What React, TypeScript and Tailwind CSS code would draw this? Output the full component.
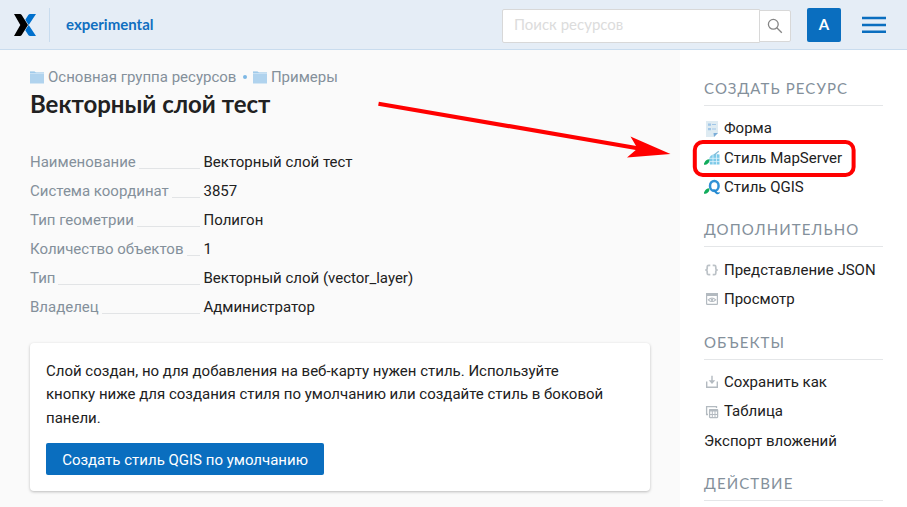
import type { ReactNode } from "react";

function Folder() {
  return (
    <svg width="14" height="13" viewBox="0 0 14 13" className="mr-1 shrink-0">
      <path d="M0 .8h5l1 1h8V12.600H0z" fill="#b0d3ee" />
      <path d="M0 .5h4.500l1 1H14v.8H0z" fill="#a0caea" />
      <path d="M0 2.500h14" stroke="#d5e8f6" strokeWidth=".7" />
    </svg>
  );
}

function FormIcon() {
  return (
    <svg width="16" height="16" viewBox="0 0 16 16">
      <path d="M2 0h12v12l-4 4H2z" fill="#deebf2" />
      <path d="M9.500 12H14l-4 4z" fill="#7badd8" />
      <path d="M4 2.500h3v2.200H4zM4 7h3v2.200H4z" fill="#a0c6e7" />
      <path d="M8 3.500h4M8 8h4" stroke="#a0c6e7" strokeWidth="1" />
    </svg>
  );
}

const leaf = "M-.5 14.800C1 10.500 2.500 9.300 5.300 9.300C5.800 12 4 14.800 -.5 14.800Z";

function MapServerIcon() {
  return (
    <svg width="16" height="16" viewBox="0 0 16 16">
      <path d="M5 8.500Q6.500 5 9 4.500Q12 3.500 15.500 4.500V14.500H6z" fill="#7cc9e8" />
      <path d="M9 4v11M12.500 4v11M5 8.300h11M5 11.600h11" stroke="#e2f4fb" strokeWidth=".8" />
      <path d="M10 5L14.800 1.200" stroke="#84bcd8" strokeWidth="1.200" />
      <path d={leaf} fill="#12ac5c" />
    </svg>
  );
}

function QgisIcon() {
  return (
    <svg width="16" height="16" viewBox="0 0 16 16">
      <ellipse cx="10.300" cy="6.900" rx="4.300" ry="5" fill="none" stroke="#3191d5" strokeWidth="2.500" />
      <path d="M9 10.500Q11 9.500 12.500 12.500Q14 14 16 13Q15.500 15.800 12.800 15.200Q11 14.800 10 12z" fill="#2389d1" />
      <path d={leaf} fill="#12ac5c" />
    </svg>
  );
}

function BracesIcon() {
  return (
    <svg width="16" height="16" viewBox="0 0 16 16" fill="none" stroke="#bcc2c7" strokeWidth="1.700">
      <path d="M6.300 3.300H4.700Q3.200 3.300 3.200 4.800v1.700Q3.200 8 1.200 8Q3.200 8 3.200 9.500v1.700Q3.200 12.700 4.700 12.700H6.300M8.700 3.300h1.600Q11.800 3.300 11.800 4.800v1.700Q11.800 8 13.800 8Q11.800 8 11.800 9.500v1.700Q11.800 12.700 10.300 12.700H8.700" />
    </svg>
  );
}

function PreviewIcon() {
  return (
    <svg width="16" height="16" viewBox="0 0 16 16" fill="none" stroke="#b3bac0">
      <rect x="2.600" y="2.600" width="10.800" height="10.800" rx=".6" strokeWidth="1.200" />
      <path d="M2 3.500h12" strokeWidth="3" />
      <path d="M4.300 8.800Q8 5.200 11.700 8.800Q8 12.200 4.300 8.800Z" strokeWidth="1.100" />
      <circle cx="8" cy="8.700" r="1.200" fill="#b3bac0" stroke="none" />
    </svg>
  );
}

function SaveIcon() {
  return (
    <svg width="16" height="16" viewBox="0 0 16 16" fill="none" stroke="#b3bac0" strokeWidth="1.400">
      <path d="M2.700 7.500v5.800h10.600V7.500M8 1.800v7" />
      <path d="M4.700 6.300h6.600L8 10z" fill="#b3bac0" stroke="none" />
    </svg>
  );
}

function TableIcon() {
  return (
    <svg width="16" height="16" viewBox="0 0 16 16" fill="none" stroke="#b3bac0" strokeWidth="1.300">
      <path d="M4 10.500H2.600V2.600h9.900V4" />
      <rect x="5.600" y="5.600" width="8" height="8" rx=".5" />
      <path d="M5 6.500h9" strokeWidth="2" />
      <path d="M5 10.500h9M8.300 7v7M11 7v7" strokeWidth="1" />
    </svg>
  );
}

function Heading({ children }: { children: ReactNode }) {
  return (
    <h2 className="h-[31px] border-b border-[#e4e6e8] font-['Lato','Open_Sans',sans-serif] text-[15px] leading-[26px] tracking-[1.100px] whitespace-nowrap text-[#84909b]">
      {children}
    </h2>
  );
}

function Item({ icon, children }: { icon?: ReactNode; children: ReactNode }) {
  return (
    <li className="flex h-[29.250px] items-center whitespace-nowrap">
      {icon && <span className="mr-1 shrink-0">{icon}</span>}
      <span>{children}</span>
    </li>
  );
}

const details = [
  ["Наименование", "Векторный слой тест"],
  ["Система координат", "3857"],
  ["Тип геометрии", "Полигон"],
  ["Количество объектов", "1"],
  ["Тип", "Векторный слой (vector_layer)"],
  ["Владелец", "Администратор"],
];

export default function App() {
  return (
    <div className="relative flex h-[507px] w-[907px] flex-col overflow-hidden bg-[#fafafa] font-['Roboto','Noto_Sans',sans-serif] text-[15px] text-[#212121]">
      <header className="flex h-[50px] shrink-0 items-center border-b border-[#c9dcee] bg-[#e5edf6] font-['Lato','Open_Sans',sans-serif]">
        <svg width="22" height="22" viewBox="0 0 22 22" className="ml-[14px]">
          <path d="M0 0H6Q7 0 7.700 1L14 11L7.700 21Q7 22 6 22H0L6.300 11z" fill="#000" />
          <path d="M22 0H16.200Q15 0 14.300 1L11.300 5.700L14.700 11L22 0ZM22 22H16.200Q15 22 14.300 21L11.300 16.300L14.700 11z" fill="#0070cd" />
        </svg>
        <span className="ml-[13px] h-[34px] w-px bg-[#c9dcee]" />
        <span className="ml-4 flex-1 text-[15px] font-bold text-[#106fc0]">experimental</span>
        <div className="mt-0.5 flex h-[34px] w-[289px] items-center">
          <div className="flex h-[34px] flex-1 items-center rounded-l-[2px] border border-[#d8d8d8] bg-white pb-0.5 pl-[11px] text-[15px] text-[#dcdcdc]">Поиск ресурсов</div>
          <div className="-ml-px flex h-8 w-8 items-center justify-center rounded-r-[2px] border border-[#d8d8d8] bg-white">
            <svg width="16" height="16" viewBox="0 0 16 16" fill="none" stroke="#858585" strokeWidth="1.300">
              <circle cx="6.300" cy="6.300" r="4.900" />
              <path d="M9.800 9.800l5 5" />
            </svg>
          </div>
        </div>
        <div className="ml-4 flex h-[34px] w-[34px] items-center justify-center rounded-[2px] bg-[#0a6ebf] text-[15px] font-bold text-white">A</div>
        <svg width="24" height="17" viewBox="0 0 24 17" className="mr-[21px] ml-[21px]" stroke="#0a6ebf" strokeWidth="2.500">
          <path d="M0 2h24M0 9h24M0 15.750h24" />
        </svg>
      </header>
      <div className="flex min-h-0 flex-1">
        <main className="w-[680px] shrink-0 pr-[30px] pl-[30px]">
          <nav className="mt-4 flex h-[22px] items-center whitespace-nowrap text-[#84909b]">
            <Folder />
            <span>Основная группа ресурсов</span>
            <span className="mr-[6px] ml-[6.500px] h-1 w-1 rounded-full bg-[#7db7e4]" />
            <Folder />
            <span>Примеры</span>
          </nav>
          <h1 className="h-[34px] font-['Lato','Open_Sans',sans-serif] text-[24px] leading-[32px] font-bold">Векторный слой тест</h1>
          <dl className="mt-[26px]">
            {details.map(([label, value]) => (
              <div key={label} className="flex h-[29px] items-center whitespace-nowrap">
                <dt className="mr-[3.500px] flex w-[170px] items-center text-[#84909b]">
                  {label}
                  <span className="ml-[3px] h-[13px] flex-1 border-b border-[#e2e4e6]" />
                </dt>
                <dd>{value}</dd>
              </div>
            ))}
          </dl>
          <section className="mt-[21px] h-[148px] rounded-[4px] bg-white px-4 pt-4 shadow-[0_1px_3px_rgba(0,0,0,0.25)]">
            <p className="w-[562px] leading-[23.600px]"><span className="relative top-[0.600px]">Слой создан, но для добавления на веб-карту нужен стиль. Используйте кнопку ниже для создания стиля по умолчанию или создайте стиль в боковой панели.</span></p>
            <button className="mt-[13px] flex h-8 w-[278px] items-center justify-center rounded-[2px] bg-[#0a6ebf] pt-0.5 whitespace-nowrap text-white">Создать стиль QGIS по умолчанию</button>
          </section>
        </main>
        <aside className="w-[227px] shrink-0 bg-white pt-[25px] pr-6 pl-6">
          <Heading>СОЗДАТЬ РЕСУРС</Heading>
          <ul className="mt-2 mb-[14.250px]">
            <Item icon={<FormIcon />}>Форма</Item>
            <Item icon={<MapServerIcon />}>Стиль MapServer</Item>
            <Item icon={<QgisIcon />}>Стиль QGIS</Item>
          </ul>
          <Heading>ДОПОЛНИТЕЛЬНО</Heading>
          <ul className="mt-[8.500px] mb-[15px]">
            <Item icon={<BracesIcon />}>Представление JSON</Item>
            <Item icon={<PreviewIcon />}>Просмотр</Item>
          </ul>
          <Heading>ОБЪЕКТЫ</Heading>
          <ul className="mt-[7.800px] mb-[14.450px]">
            <Item icon={<SaveIcon />}>Сохранить как</Item>
            <Item icon={<TableIcon />}>Таблица</Item>
            <Item>Экспорт вложений</Item>
          </ul>
          <Heading>ДЕЙСТВИЕ</Heading>
        </aside>
      </div>
      <svg className="pointer-events-none absolute inset-0" width="907" height="507">
        <path d="M378.500 103.700L639 148.500" stroke="#f00" strokeWidth="4.200" />
        <path d="M670.500 154L627 157.500L637.500 148.500L630.500 136.500Z" fill="#f00" />
        <rect x="694.800" y="142" width="158.800" height="33" rx="8" fill="none" stroke="#f00" strokeWidth="4" />
      </svg>
    </div>
  );
}
